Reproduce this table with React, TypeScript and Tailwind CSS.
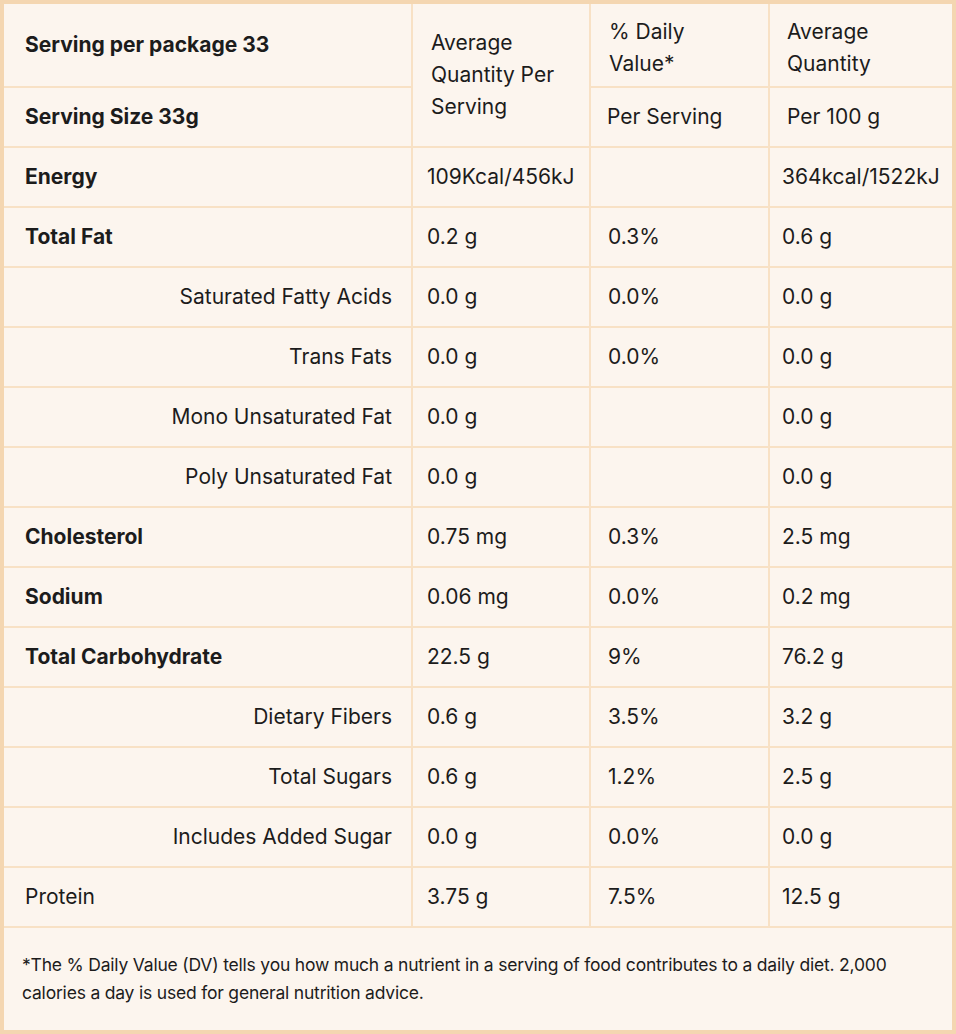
import React from "react";

type Row = {
  name: string;
  bold?: boolean;
  sub?: boolean;
  perServing: string;
  dv: string;
  per100: string;
};

const rows: Row[] = [
  { name: "Energy", bold: true, perServing: "109Kcal/456kJ", dv: "", per100: "364kcal/1522kJ" },
  { name: "Total Fat", bold: true, perServing: "0.2 g", dv: "0.3%", per100: "0.6 g" },
  { name: "Saturated Fatty Acids", sub: true, perServing: "0.0 g", dv: "0.0%", per100: "0.0 g" },
  { name: "Trans Fats", sub: true, perServing: "0.0 g", dv: "0.0%", per100: "0.0 g" },
  { name: "Mono Unsaturated Fat", sub: true, perServing: "0.0 g", dv: "", per100: "0.0 g" },
  { name: "Poly Unsaturated Fat", sub: true, perServing: "0.0 g", dv: "", per100: "0.0 g" },
  { name: "Cholesterol", bold: true, perServing: "0.75 mg", dv: "0.3%", per100: "2.5 mg" },
  { name: "Sodium", bold: true, perServing: "0.06 mg", dv: "0.0%", per100: "0.2 mg" },
  { name: "Total Carbohydrate", bold: true, perServing: "22.5 g", dv: "9%", per100: "76.2 g" },
  { name: "Dietary Fibers", sub: true, perServing: "0.6 g", dv: "3.5%", per100: "3.2 g" },
  { name: "Total Sugars", sub: true, perServing: "0.6 g", dv: "1.2%", per100: "2.5 g" },
  { name: "Includes Added Sugar", sub: true, perServing: "0.0 g", dv: "0.0%", per100: "0.0 g" },
  { name: "Protein", perServing: "3.75 g", dv: "7.5%", per100: "12.5 g" },
];

const cell = "border-2 border-[#f8e1c5] align-middle";

export default function App() {
  return (
    <div className="w-[956px] h-[1034px] bg-[#fcf5ee] border-4 border-[#f4d6b1] text-[#1c1c1c] font-['Inter','Liberation_Sans',sans-serif] text-[21px] leading-[32px] overflow-hidden">
      <table className="w-full border-collapse table-fixed border-hidden">
        <colgroup>
          <col className="w-[408px]" />
          <col className="w-[178px]" />
          <col className="w-[179px]" />
          <col />
        </colgroup>
        <tbody>
          <tr className="h-[83px]">
            <td className={`${cell} pl-[21px] font-bold`}>Serving per package 33</td>
            <td rowSpan={2} className={`${cell} pl-[18px] pr-2`}>
              Average Quantity Per Serving
            </td>
            <td className={`${cell} pl-[18px] pr-2 align-top pt-[12px]`}>
              % Daily
              <br />
              Value*
            </td>
            <td className={`${cell} pl-[17px] pr-2 align-top pt-[12px]`}>
              Average
              <br />
              Quantity
            </td>
          </tr>
          <tr className="h-[60px]">
            <td className={`${cell} pl-[21px] font-bold`}>Serving Size 33g</td>
            <td className={`${cell} pl-[16px]`}>Per Serving</td>
            <td className={`${cell} pl-[17px]`}>Per 100 g</td>
          </tr>
          {rows.map((r) => (
            <tr key={r.name} className="h-[60px]">
              <td
                className={`${cell} ${r.sub ? "text-right pr-[19px]" : "pl-[21px]"} ${
                  r.bold ? "font-bold" : ""
                }`}
              >
                {r.name}
              </td>
              <td className={`${cell} pl-[14px]`}>{r.perServing}</td>
              <td className={`${cell} pl-[17px]`}>{r.dv}</td>
              <td className={`${cell} pl-[12px]`}>{r.per100}</td>
            </tr>
          ))}
          <tr className="h-[103px]">
            <td colSpan={4} className={`${cell} pl-[18px] pr-6 text-[17.5px] leading-[28px] tracking-[-0.2px]`}>
              *The % Daily Value (DV) tells you how much a nutrient in a serving of food contributes to a daily diet. 2,000
              calories a day is used for general nutrition advice.
            </td>
          </tr>
        </tbody>
      </table>
    </div>
  );
}
